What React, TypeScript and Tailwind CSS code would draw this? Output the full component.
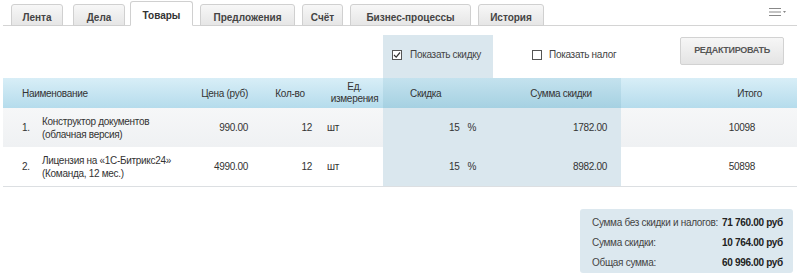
import React from 'react';

const cols = 'grid grid-cols-[197px_58px_62px_63px_110px_128px_174px]';

const tabs = [
  { label: 'Лента', w: 'w-[52px]', ml: 'ml-[8px]' },
  { label: 'Дела', w: 'w-[52px]', ml: 'ml-[10px]' },
  { label: 'Товары', w: 'w-[63px]', ml: 'ml-[5px]', active: true },
  { label: 'Предложения', w: 'w-[95px]', ml: 'ml-[7px]' },
  { label: 'Счёт', w: 'w-[41px]', ml: 'ml-[7px]' },
  { label: 'Бизнес-процессы', w: 'w-[121px]', ml: 'ml-[7px]' },
  { label: 'История', w: 'w-[66px]', ml: 'ml-[7px]' },
];

const rows = [
  { n: '1.', name: ['Конструктор документов', '(облачная версия)'], price: '990.00', qty: '12', unit: 'шт', disc: '15', sum: '1782.00', total: '10098', odd: true },
  { n: '2.', name: ['Лицензия на «1С-Битрикс24»', '(Команда, 12 мес.)'], price: '4990.00', qty: '12', unit: 'шт', disc: '15', sum: '8982.00', total: '50898', odd: false },
];

const Checkbox: React.FC<{ checked?: boolean }> = ({ checked }) => (
  <span className="w-[10px] h-[10px] border border-[#555] bg-white flex items-center justify-center">
    {checked && (
      <svg width="8" height="8" viewBox="0 0 8 8">
        <path d="M1 4 L3.2 6.2 L7 1.5" fill="none" stroke="#333" strokeWidth="1.2" />
      </svg>
    )}
  </span>
);

const App: React.FC = () => {
  return (
    <div className="w-[800px] h-[277px] bg-white text-[#333] text-[10px] font-['Liberation_Sans',Arial,sans-serif] overflow-hidden whitespace-nowrap">
      {/* Tabs */}
      <div className="relative h-[26px] mx-[3px] border-b border-[#d4d4d4] flex items-end">
        {tabs.map((t) => (
          <div
            key={t.label}
            className={`${t.w} ${t.ml} -mb-px flex justify-center font-bold rounded-t-[3px] border border-[#d0d0d0] ${
              t.active
                ? 'h-[25px] bg-white border-b-white pt-[6px] text-[#333]'
                : 'h-[22px] bg-gradient-to-b from-[#f7f7f7] to-[#e6e6e6] pt-[5px] text-[#444]'
            }`}
          >
            {t.label}
          </div>
        ))}
        <div className="ml-auto mr-[11px] mb-[9px] flex items-center gap-[2px]">
          <svg width="12" height="8" viewBox="0 0 12 8">
            <path d="M0 0.5 H12 M0 4 H12 M0 7.5 H12" stroke="#888" strokeWidth="1" />
          </svg>
          <svg width="3" height="2" viewBox="0 0 3 2">
            <path d="M0 0 H3 L1.5 2 Z" fill="#888" />
          </svg>
        </div>
      </div>

      <div className="tracking-[-0.3px]">
        {/* Controls */}
        <div className={`${cols} mx-[3px] mt-[9px] h-[43px]`}>
          <div className="col-span-4" />
          <div className="bg-[#dae7ee] flex items-center pl-[9px] gap-[8px] pb-[4px] text-[#444]">
            <Checkbox checked />
            <span>Показать скидку</span>
          </div>
          <div className="flex items-center pl-[39px] gap-[7px] pb-[4px] text-[#444]">
            <Checkbox />
            <span>Показать налог</span>
          </div>
          <div className="pl-[59px] pt-[2px]">
            <button className="w-[104px] h-[28px] rounded-[2px] border border-[#d2d2d2] bg-gradient-to-b from-[#f6f6f6] to-[#e4e4e4] font-bold text-[#555] text-[9px]">
              РЕДАКТИРОВАТЬ
            </button>
          </div>
        </div>

        {/* Table header */}
        <div className={`${cols} mx-[3px] h-[30px] bg-gradient-to-b from-[#d8eef7] to-[#b5dcec]`}>
          <div className="flex items-center pl-[19px]">Наименование</div>
          <div className="flex items-center justify-end pr-[10px]">Цена (руб)</div>
          <div className="flex items-center justify-center pl-[2px]">Кол-во</div>
          <div className="flex items-center justify-center text-center leading-[12px] pl-[6px]">Ед.<br />измерения</div>
          <div className="flex items-center pl-[27px] bg-gradient-to-b from-[#c4e2ee] to-[#a5d1e2]">Скидка</div>
          <div className="flex items-center justify-center pl-[8px] bg-gradient-to-b from-[#c4e2ee] to-[#a5d1e2]">Сумма скидки</div>
          <div className="flex items-center justify-end pr-[33px]">Итого</div>
        </div>

        {/* Rows */}
        {rows.map((r) => (
          <div
            key={r.n}
            className={`${cols} mx-[3px] h-[39px] ${r.odd ? 'bg-gradient-to-b from-[#f6f7f8] to-[#eff1f3]' : 'bg-white'}`}
          >
            <div className="flex items-center pl-[19px]">
              <span className="w-[20px]">{r.n}</span>
              <span className="leading-[13px]">
                {r.name[0]}
                <br />
                {r.name[1]}
              </span>
            </div>
            <div className="flex items-center justify-end pr-[10px]">{r.price}</div>
            <div className="flex items-center justify-end pr-[8px]">{r.qty}</div>
            <div className="flex items-center pl-[7px]">{r.unit}</div>
            <div className="flex items-center justify-end pr-[17px] gap-[8px] bg-[#dae7ee]">
              <span>{r.disc}</span>
              <span>%</span>
            </div>
            <div className="flex items-center justify-end pr-[14px] bg-[#dae7ee]">{r.sum}</div>
            <div className="flex items-center justify-end pr-[40px]">{r.total}</div>
          </div>
        ))}
        <div className="mx-[3px] h-px bg-[#dcdfe2]" />

        {/* Summary */}
        <div className="flex justify-end pr-[7px] mt-[22px]">
          <div className="w-[213px] h-[64px] rounded-[3px] bg-[#dce8ef] pt-[3px] pl-[12px] pr-[10px]">
            {[
              ['Сумма без скидки и налогов:', '71 760.00 руб'],
              ['Сумма скидки:', '10 764.00 руб'],
              ['Общая сумма:', '60 996.00 руб'],
            ].map(([l, v]) => (
              <div key={l} className="h-[20px] flex items-center justify-between">
                <span className="text-[#444]">{l}</span>
                <span className="font-bold text-[#222]">{v}</span>
              </div>
            ))}
          </div>
        </div>
      </div>
    </div>
  );
};

export default App;
